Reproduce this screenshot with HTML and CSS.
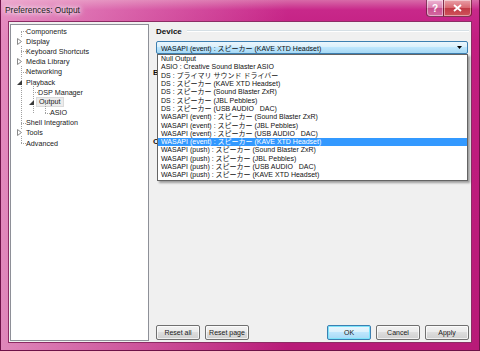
FILE: index.html
```html
<!DOCTYPE html>
<html lang="en">

<head>
    <meta charset="UTF-8">
    <title>Preferences: Output</title>
    <link rel="stylesheet" href="styles.css">
</head>

<body>
    <div class="window">
        <div class="titlebar">
            <span class="title">Preferences: Output</span>
            <div class="caption-buttons">
                <span class="cap help">?</span>
                <span class="cap close">
                    <svg width="9" height="8" viewBox="0 0 9 8"><path d="M1 1 L8 7 M8 1 L1 7" stroke="#fff" stroke-width="1.8" /></svg>
                </span>
            </div>
        </div>

        <div class="client">
            <!-- page tree -->
            <div class="tree">
                <ul class="branch root">
                    <li class="row leaf"><span class="glyph"></span>Components</li>
                    <li class="row"><span class="glyph"><svg width="5" height="7" viewBox="0 0 5 7"><path d="M0.5 0.5 L4.5 3.5 L0.5 6.5 Z" fill="#fff" stroke="#8a8a8a" /></svg></span>Display</li>
                    <li class="row leaf"><span class="glyph"></span>Keyboard Shortcuts</li>
                    <li class="row"><span class="glyph"><svg width="5" height="7" viewBox="0 0 5 7"><path d="M0.5 0.5 L4.5 3.5 L0.5 6.5 Z" fill="#fff" stroke="#8a8a8a" /></svg></span>Media Library</li>
                    <li class="row leaf"><span class="glyph"></span>Networking</li>
                    <li class="row"><span class="glyph"><svg width="5" height="5" viewBox="0 0 5 5"><path d="M5 0 L5 5 L0 5 Z" fill="#3a3a3a" /></svg></span>Playback</li>
                    <li>
                        <ul class="branch sub">
                            <li class="row leaf"><span class="glyph"></span>DSP Manager</li>
                            <li class="row"><span class="glyph"><svg width="5" height="5" viewBox="0 0 5 5"><path d="M5 0 L5 5 L0 5 Z" fill="#3a3a3a" /></svg></span><span class="current">Output</span></li>
                            <li>
                                <ul class="branch sub last">
                                    <li class="row leaf"><span class="glyph"></span>ASIO</li>
                                </ul>
                            </li>
                        </ul>
                    </li>
                    <li class="row leaf"><span class="glyph"></span>Shell Integration</li>
                    <li class="row"><span class="glyph"><svg width="5" height="7" viewBox="0 0 5 7"><path d="M0.5 0.5 L4.5 3.5 L0.5 6.5 Z" fill="#fff" stroke="#8a8a8a" /></svg></span>Tools</li>
                    <li class="row leaf"><span class="glyph"></span>Advanced</li>
                </ul>
            </div>

            <!-- output page -->
            <div class="page">
                <div class="group-title">
                    <span>Device</span>
                    <span class="etched"></span>
                </div>

                <div class="combo-wrap">
                    <div class="combo">
                        <span>WASAPI (event) : スピーカー (KAVE XTD Headset)</span>
                        <svg width="5" height="3" viewBox="0 0 5 3"><path d="M0 0 L5 0 L2.5 3 Z" fill="#000" /></svg>
                    </div>

                    <ul class="droplist">
                        <li>Null Output</li>
                        <li>ASIO : Creative Sound Blaster ASIO</li>
                        <li>DS : プライマリ サウンド ドライバー</li>
                        <li>DS : スピーカー (KAVE XTD Headset)</li>
                        <li>DS : スピーカー (Sound Blaster ZxR)</li>
                        <li>DS : スピーカー (JBL Pebbles)</li>
                        <li>DS : スピーカー (USB AUDIO   DAC)</li>
                        <li>WASAPI (event) : スピーカー (Sound Blaster ZxR)</li>
                        <li>WASAPI (event) : スピーカー (JBL Pebbles)</li>
                        <li>WASAPI (event) : スピーカー (USB AUDIO   DAC)</li>
                        <li class="selected">WASAPI (event) : スピーカー (KAVE XTD Headset)</li>
                        <li>WASAPI (push) : スピーカー (Sound Blaster ZxR)</li>
                        <li>WASAPI (push) : スピーカー (JBL Pebbles)</li>
                        <li>WASAPI (push) : スピーカー (USB AUDIO   DAC)</li>
                        <li>WASAPI (push) : スピーカー (KAVE XTD Headset)</li>
                    </ul>
                </div>

                <!-- these sit behind the open list -->
                <div class="hidden-label first">Buffer length</div>
                <div class="hidden-label second">Output format</div>
                <p class="note">Note: dither and output data format apply only to devices that support them.</p>

                <div class="buttons">
                    <button>Reset all</button>
                    <button>Reset page</button>
                    <span class="spacer"></span>
                    <button class="default">OK</button>
                    <button>Cancel</button>
                    <button>Apply</button>
                </div>
            </div>
        </div>
    </div>
</body>

</html>
```

FILE: styles.css
```css
body {
    margin: 0;
    padding: 0;
    font-family: "Liberation Sans", "Noto Sans CJK JP", sans-serif;
    font-size: 7px;
    color: #1a1a1a;
    overflow: hidden;
}

ul {
    list-style: none;
    margin: 0;
    padding: 0;
}

.window {
    width: 480px;
    height: 351px;
    box-sizing: border-box;
    display: flex;
    flex-direction: column;
    padding: 0 8px 8px 8px;
    border: 1px solid #6e1248;
    border-top: none;
    background:
        linear-gradient(to right, rgba(255, 225, 240, 0.55) 0, rgba(255, 225, 240, 0.15) 45%, rgba(255, 225, 240, 0) 60%),
        linear-gradient(to bottom, #d86aa8 0, #c8288a 10px, #c21d80 40px, #b81a78 100%);
}

.titlebar {
    height: 21px;
    flex-shrink: 0;
    display: flex;
    justify-content: space-between;
    align-items: flex-start;
    margin: 0 -1px 0 -4px;
}

.title {
    font-size: 8.4px;
    line-height: 20px;
    color: #1e1e1e;
    text-shadow: 0 0 4px #fff, 0 0 6px #fff, 0 0 8px rgba(255, 255, 255, 0.8);
}

.caption-buttons {
    display: flex;
}

.cap {
    height: 16px;
    display: flex;
    align-items: center;
    justify-content: center;
    border: 1px solid rgba(90, 10, 50, 0.7);
    border-top: none;
    box-shadow: inset 0 0 0 1px rgba(255, 255, 255, 0.45);
    color: #fff;
    font-size: 10px;
    font-weight: bold;
}

.help {
    width: 16px;
    border-radius: 0 0 0 4px;
    border-right: none;
    background: linear-gradient(to bottom, #eeb6d4 0, #d97fb0 50%, #c9508f 51%, #d46aa2 100%);
}

.close {
    width: 27px;
    border-radius: 0 0 4px 0;
    background: linear-gradient(to bottom, #e9a0a8 0, #d8666f 50%, #c13a46 51%, #d0535a 100%);
}

.client {
    flex: 1;
    display: flex;
    background-color: #f0f0f0;
    padding: 2px 2px 1px 1px;
    border: 1px solid #8c2c64;
    margin: 0 -1px -1px -1px;
}

/* tree */

.tree {
    width: 137px;
    flex-shrink: 0;
    background-color: #fff;
    border: 1px solid #8e9098;
    padding-top: 1px;
}

.branch {
    position: relative;
}

.branch::before {
    content: "";
    position: absolute;
    left: 10px;
    top: 5px;
    bottom: 5px;
    border-left: 1px dotted #a0a0a0;
}

.branch.sub {
    padding-left: 12px;
}

.branch.sub::before {
    left: 22px;
    top: -5px;
}

.branch.sub.last::before {
    top: -5px;
    bottom: 5px;
}

.row {
    display: flex;
    align-items: center;
    height: 10.2px;
    white-space: nowrap;
    font-size: 7.2px;
}

.glyph {
    width: 9px;
    height: 10px;
    margin-left: 6px;
    display: flex;
    align-items: center;
    position: relative;
    z-index: 1;
}

.leaf .glyph {
    margin-left: 10px;
    width: 5px;
    height: 5px;
    align-self: flex-start;
    border-bottom: 1px dotted #a0a0a0;
}

.current {
    padding: 0 2px;
    margin-left: -2px;
    background-color: #ececec;
    border: 1px solid #dadada;
    line-height: 8px;
}

.row svg {
    background: #fff;
}

/* page */

.page {
    flex: 1;
    margin-left: 7px;
    display: flex;
    flex-direction: column;
    position: relative;
}

.group-title {
    display: flex;
    align-items: center;
    gap: 5px;
    height: 12px;
    margin-top: 1px;
    font-size: 8px;
    font-weight: bold;
    color: #111;
}

.etched {
    flex: 1;
    border-top: 1px solid #d5dfe5;
    border-bottom: 1px solid #fff;
}

.combo-wrap {
    position: relative;
    margin-top: 4px;
    margin-right: 1px;
    z-index: 2;
}

.combo {
    height: 11px;
    display: flex;
    align-items: center;
    justify-content: space-between;
    padding: 0 5px 0 4px;
    border: 1px solid #3c7fb1;
    border-radius: 2px;
    background: linear-gradient(to bottom, #eaf6fd 0, #d9f0fc 45%, #bee6fd 50%, #a7d9f5 100%);
    font-size: 7px;
    color: #111;
}

.droplist {
    position: absolute;
    top: 13px;
    left: 1px;
    width: 309px;
    background: #fff;
    border: 1px solid #646464;
    box-shadow: 2px 2px 2px rgba(0, 0, 0, 0.35);
}

.droplist li {
    height: 8.32px;
    line-height: 8.32px;
    padding-left: 3px;
    white-space: pre;
    font-size: 7px;
    color: #111;
}

.droplist li.selected {
    background-color: #3399ff;
    color: #fff;
}

.hidden-label {
    font-weight: bold;
    font-size: 8px;
    margin-left: -3px;
    color: #111;
}

.hidden-label.first {
    margin-top: 14px;
}

.hidden-label.second {
    margin-top: 60px;
}

.note {
    margin: 26px 0 0 5px;
    font-size: 7px;
    color: #333;
}

.buttons {
    margin-top: auto;
    margin-bottom: 1px;
    display: flex;
    gap: 5px;
}

.spacer {
    flex: 1;
}

button {
    width: 44px;
    height: 15px;
    padding: 0;
    font-family: "Liberation Sans", sans-serif;
    font-size: 7px;
    color: #1a1a1a;
    border: 1px solid #707070;
    border-radius: 2px;
    background: linear-gradient(to bottom, #f2f2f2 0, #ebebeb 49%, #dddddd 50%, #cfcfcf 100%);
    box-shadow: inset 0 0 0 1px rgba(255, 255, 255, 0.7);
}

button.default {
    border-color: #3c7fb1;
    background: linear-gradient(to bottom, #eaf6fd 0, #d9f0fc 49%, #bee6fd 50%, #a7d9f5 100%);
    box-shadow: inset 0 0 0 1px #7de4fb;
}
```
